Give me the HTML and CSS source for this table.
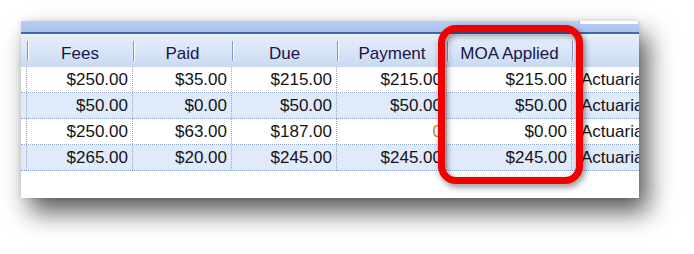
FILE: index.html
```html
<!DOCTYPE html>
<html>
<head>
<meta charset="utf-8">
<link rel="stylesheet" href="styles.css">
</head>
<body>
<div class="stage">
  <div class="panel">
    <div class="titlebar"><div class="searchbox"></div></div>
    <div class="grid-head">
      <div class="hcell"></div>
      <div class="hcell">Fees</div>
      <div class="hcell">Paid</div>
      <div class="hcell">Due</div>
      <div class="hcell">Payment</div>
      <div class="hcell">MOA Applied</div>
      <div class="hcell hlast"></div>
    </div>
    <div class="row">
      <div class="cell"></div>
      <div class="cell num">$250.00</div>
      <div class="cell num">$35.00</div>
      <div class="cell num">$215.00</div>
      <div class="cell num">$215.00</div>
      <div class="cell num">$215.00</div>
      <div class="cell txt">Actuarial</div>
    </div>
    <div class="row alt">
      <div class="cell"></div>
      <div class="cell num">$50.00</div>
      <div class="cell num">$0.00</div>
      <div class="cell num">$50.00</div>
      <div class="cell num">$50.00</div>
      <div class="cell num">$50.00</div>
      <div class="cell txt">Actuarial</div>
    </div>
    <div class="row">
      <div class="cell"></div>
      <div class="cell num">$250.00</div>
      <div class="cell num">$63.00</div>
      <div class="cell num">$187.00</div>
      <div class="cell num editing">0</div>
      <div class="cell num">$0.00</div>
      <div class="cell txt">Actuarial</div>
    </div>
    <div class="row alt">
      <div class="cell"></div>
      <div class="cell num">$265.00</div>
      <div class="cell num">$20.00</div>
      <div class="cell num">$245.00</div>
      <div class="cell num">$245.00</div>
      <div class="cell num">$245.00</div>
      <div class="cell txt">Actuarial</div>
    </div>
  </div>
  <div class="highlight"></div>
</div>
</body>
</html>
```
FILE: styles.css
```css
html, body {
  margin: 0;
  padding: 0;
  background: #ffffff;
}

.stage {
  position: relative;
  width: 694px;
  height: 254px;
  padding: 21px 0 0 21px;
  box-sizing: border-box;
  overflow: hidden;
}

.panel {
  width: 618px;
  height: 177px;
  background: #ffffff;
  overflow: hidden;
  font-family: "Liberation Sans", Arial, sans-serif;
  font-size: 17px;
  box-shadow: 9px 14px 24px rgba(0, 0, 0, 0.65), 0 0 5px rgba(0, 0, 0, 0.12);
}

.titlebar {
  height: 11px;
  background: linear-gradient(#b9cff2, #a9c3ec);
  border-bottom: 2px solid #3f64b3;
  display: flex;
  justify-content: flex-end;
}

.searchbox {
  width: 58px;
  height: 3px;
  margin-right: 1px;
  background: #ffffff;
  border-left: 1px solid #b8b8b8;
}

.grid-head,
.row {
  display: grid;
  grid-template-columns: 6px 106px 99px 105px 110px 125px 1fr;
}

.grid-head {
  height: 33px;
  background: linear-gradient(#e6eefb 0%, #dbe6f8 45%, #c9daf3 100%);
  border-top: 1px solid #f2f6fd;
  box-sizing: border-box;
}

.hcell {
  position: relative;
  text-align: center;
  color: #17154a;
  padding-top: 6px;
  line-height: 26px;
  white-space: nowrap;
}

.hcell::after {
  content: "";
  position: absolute;
  right: -1px;
  top: 6px;
  width: 1px;
  height: 20px;
  background: #7f98c9;
  box-shadow: 1px 0 0 #ffffff;
}

.hcell.hlast::after {
  display: none;
}

.row {
  height: 26px;
  box-sizing: border-box;
  border-bottom: 1px dotted #8ea5d6;
  background: #ffffff;
}

.row.alt {
  background: #dfeafb;
}

.cell {
  border-right: 1px dotted #8ea5d6;
  line-height: 25px;
  color: #141414;
  white-space: nowrap;
  overflow: hidden;
}

.cell.num {
  text-align: right;
  padding-right: 4px;
}

.cell.txt {
  border-right: none;
  padding-left: 9px;
}

.cell.editing {
  color: #c08a3c;
}

.highlight {
  position: absolute;
  left: 438px;
  top: 25px;
  width: 145px;
  height: 159px;
  box-sizing: border-box;
  border: 7px solid #f20000;
  border-radius: 18px;
  filter: drop-shadow(2px 3px 3px rgba(0, 0, 0, 0.45));
}
```
